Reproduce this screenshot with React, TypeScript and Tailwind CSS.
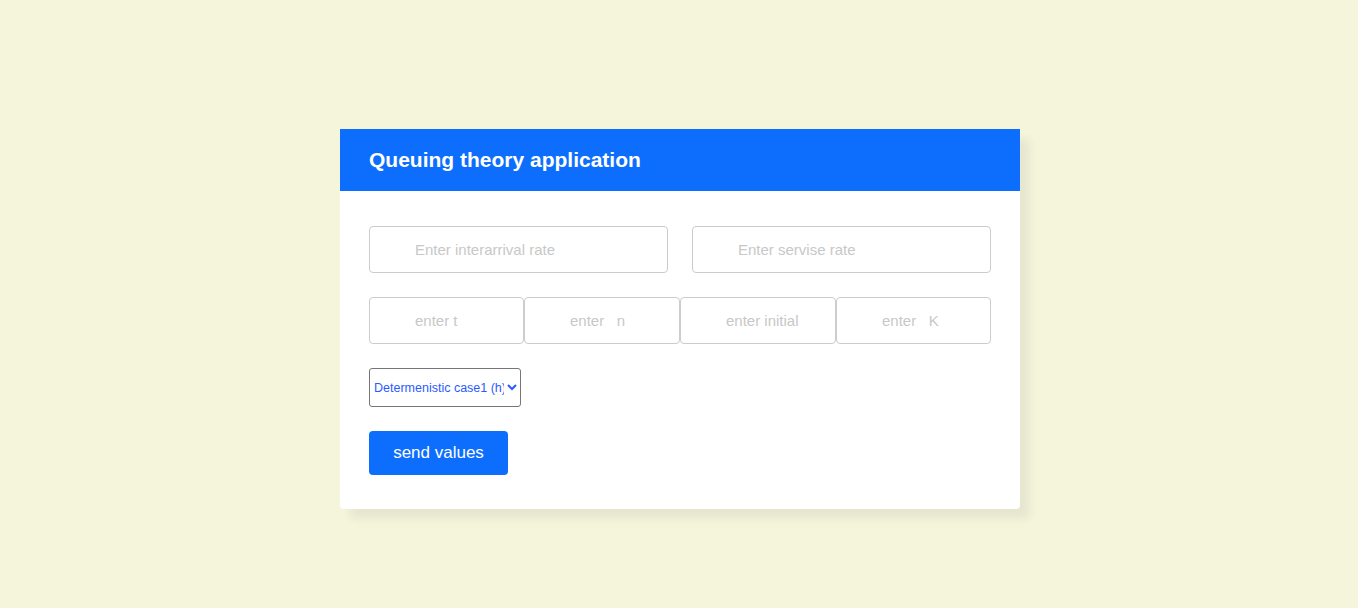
import React from "react";

const inputBase =
  "h-[47px] border border-[#cccccc] rounded-[4px] pl-[45px] text-[15px] text-[#333] placeholder:text-[#c8c8c8] outline-none bg-white min-w-0";

export default function App() {
  return (
    <div
      className="w-full h-[608px] bg-[#f5f5dc] flex justify-center pt-[129px] pl-[2px]"
      style={{ fontFamily: '"Liberation Sans", Arial, sans-serif' }}
    >
      <div className="w-[680px] h-[380px] bg-white rounded-b-[4px] shadow-[10px_10px_10px_rgba(0,0,0,0.06)] flex flex-col">
        <div className="h-[62px] bg-[#0d6efd] flex items-center px-[29px]">
          <h1 className="text-white font-bold text-[21px]">Queuing theory application</h1>
        </div>
        <div className="px-[29px] pt-[35px] flex flex-col">
          <div className="flex gap-[24px]">
            <input className={`${inputBase} w-[299px]`} placeholder="Enter interarrival rate" />
            <input className={`${inputBase} w-[299px]`} placeholder="Enter servise rate" />
          </div>
          <div className="flex mt-[24px]">
            <input className={`${inputBase} w-[155px]`} placeholder="enter t" />
            <input className={`${inputBase} w-[156px]`} placeholder="enter   n" />
            <input className={`${inputBase} w-[156px]`} placeholder="enter initial" />
            <input className={`${inputBase} w-[155px]`} placeholder="enter   K" />
          </div>
          <select
            className="mt-[24px] w-[152px] h-[39px] border border-[#767676] rounded-[3px] text-[12.5px] text-[#2a5bff] bg-white pl-0"
            style={{ fontFamily: '"Liberation Sans", Arial, sans-serif' }}
            defaultValue="1"
          >
            <option value="1">Determenistic case1 (h)</option>
            <option value="2">Determenistic case2</option>
          </select>
          <div className="mt-[24px]">
            <button className="w-[139px] h-[44px] bg-[#0d6efd] text-white text-[17px] rounded-[4px]">
              send values
            </button>
          </div>
        </div>
      </div>
    </div>
  );
}
